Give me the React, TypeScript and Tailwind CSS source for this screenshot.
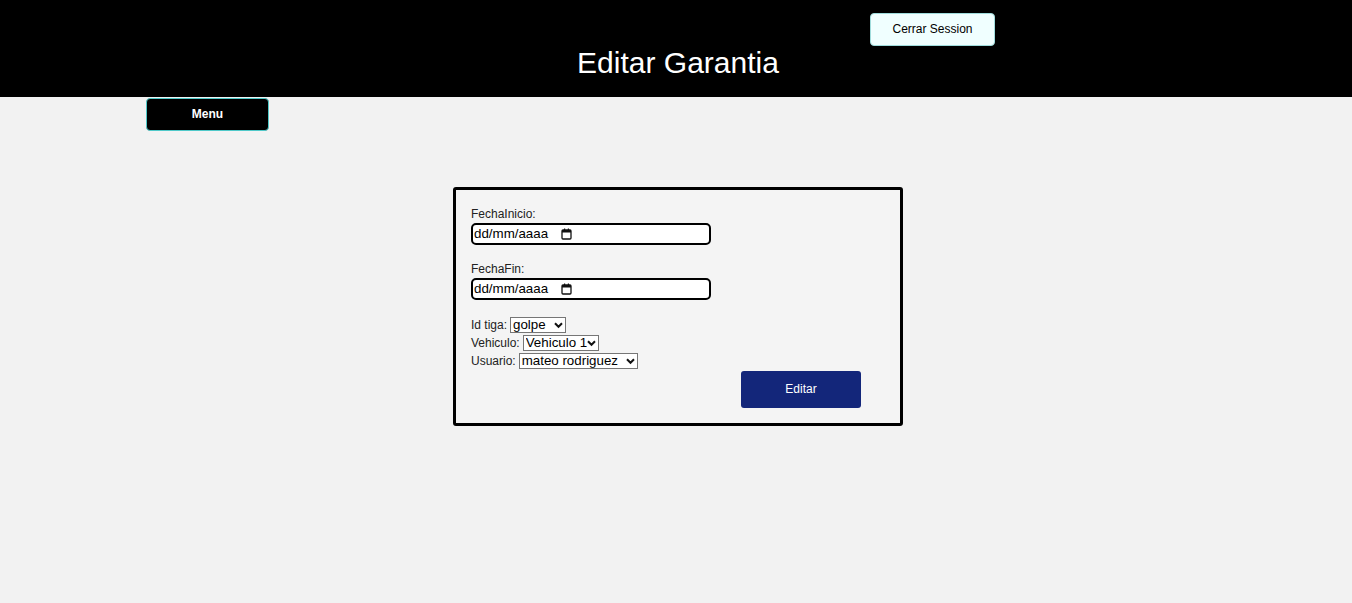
import React from 'react'

function CalendarIcon() {
  return (
    <svg width="11" height="12" viewBox="0 0 11 12" className="shrink-0">
      <rect x="1" y="2" width="9" height="9" rx="1" fill="none" stroke="#111" strokeWidth="1.3" />
      <rect x="1" y="2" width="9" height="2.5" fill="#111" />
      <rect x="3" y="0.5" width="1.2" height="2" fill="#111" />
      <rect x="6.8" y="0.5" width="1.2" height="2" fill="#111" />
    </svg>
  )
}

function Chevron() {
  return (
    <svg width="9" height="7" viewBox="0 0 9 7" className="absolute right-[3px] top-[5px] pointer-events-none">
      <path d="M1 1.2 L4.5 4.8 L8 1.2" fill="none" stroke="#111" strokeWidth="2" />
    </svg>
  )
}

function DateField({ label }: { label: string }) {
  return (
    <div className="flex flex-col">
      <label className="text-[12px] leading-[14px] text-[#222]">{label}</label>
      <div className="mt-[2px] w-[240px] h-[22px] border-2 border-black rounded-[5px] bg-white flex items-center pl-[1px]">
        <span className="text-[13.33px] text-black w-[87px]">dd/mm/aaaa</span>
        <CalendarIcon />
      </div>
    </div>
  )
}

function SelectRow({ label, value, width }: { label: string; value: string; width: string }) {
  return (
    <div className="flex items-center h-[18px] text-[12px] text-[#222]">
      <span className="mr-[3px]">{label}</span>
      <span className={`relative ${width} h-[16px]`}>
        <select
          defaultValue={value}
          className="appearance-none block w-full h-full border border-[#767676] bg-white text-[13.33px] text-black leading-[14px] py-0 pl-[2px] pr-[10px]"
        >
          <option>{value}</option>
        </select>
        <Chevron />
      </span>
    </div>
  )
}

export default function App() {
  return (
    <div className="min-h-[603px] bg-[#f2f2f2]" style={{ fontFamily: '"Liberation Sans", Arial, sans-serif' }}>
      {/* Header */}
      <header className="h-[97px] bg-black flex flex-col">
        <div className="flex justify-end pr-[357px] pt-[13px]">
          <button className="w-[125px] h-[33px] bg-[#f0ffff] border border-[#9fdcdc] rounded-[4px] text-[12px] text-black pb-[2px]">
            Cerrar Session
          </button>
        </div>
        <h1 className="text-center text-white text-[30px] leading-[34px] pl-[4px]">Editar Garantia</h1>
      </header>

      {/* Menu */}
      <div className="pl-[146px] pt-[1px]">
        <button className="w-[123px] h-[33px] bg-black border border-[#4fc9c9] rounded-[4px] text-white text-[12px] font-bold pb-[2px]">
          Menu
        </button>
      </div>

      {/* Form */}
      <div className="ml-[453px] mt-[56px] w-[450px] border-[3px] border-black rounded-[3px] bg-[#f4f4f4] pl-[15px] pt-[17px] pb-[15px]">
        <DateField label="FechaInicio:" />
        <div className="mt-[17px]">
          <DateField label="FechaFin:" />
        </div>
        <div className="mt-[16px] flex flex-col">
          <SelectRow label="Id tiga:" value="golpe" width="w-[56px]" />
          <SelectRow label="Vehiculo:" value="Vehiculo 1" width="w-[76px]" />
          <SelectRow label="Usuario:" value="mateo rodriguez" width="w-[119px]" />
        </div>
        <div className="mt-[1px] pl-[270px]">
          <button className="w-[120px] h-[37px] bg-[#13267a] rounded-[3px] text-white text-[12px] pb-[2px]">Editar</button>
        </div>
      </div>
    </div>
  )
}
